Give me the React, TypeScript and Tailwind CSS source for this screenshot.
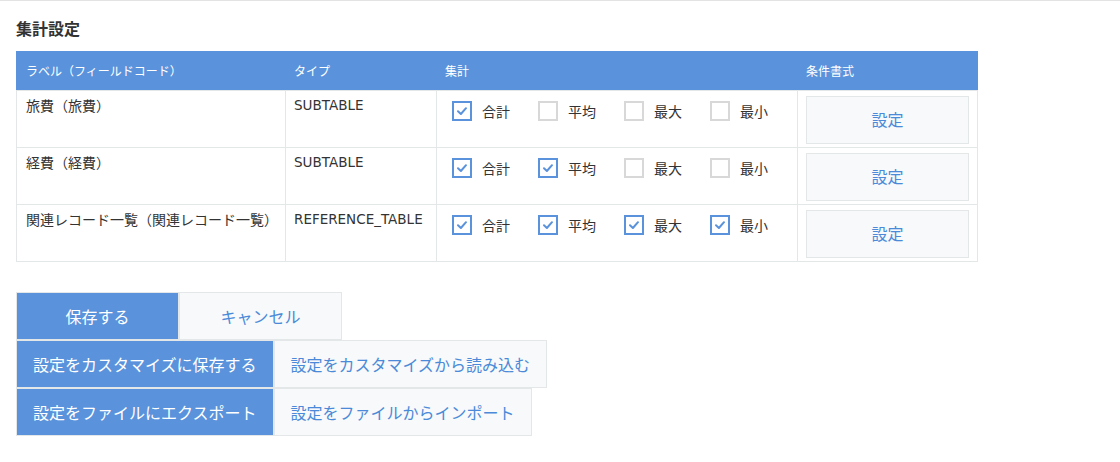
import React from 'react';

type Row = {
  label: string;
  type: string;
  checks: boolean[];
};

const rows: Row[] = [
  { label: '旅費（旅費）', type: 'SUBTABLE', checks: [true, false, false, false] },
  { label: '経費（経費）', type: 'SUBTABLE', checks: [true, true, false, false] },
  { label: '関連レコード一覧（関連レコード一覧）', type: 'REFERENCE_TABLE', checks: [true, true, true, true] },
];

const aggNames = ['合計', '平均', '最大', '最小'];

const Checkbox: React.FC<{ checked: boolean; label: string }> = ({ checked, label }) => {
  return (
    <label className="flex items-center w-[86px] shrink-0">
      <span
        className={`w-[20px] h-[20px] border-2 flex items-center justify-center bg-white ${
          checked ? 'border-[#5a93db]' : 'border-[#d8d8d8]'
        }`}
      >
        {checked && (
          <svg width="16" height="16" viewBox="0 0 16 16" fill="none">
            <path d="M4 8.3 L6.9 11 L12 5.2" stroke="#5a93db" strokeWidth="2" strokeLinecap="round" strokeLinejoin="round" />
          </svg>
        )}
      </span>
      <span className="ml-[10px] text-[14px] leading-[20px] text-[#333]">{label}</span>
    </label>
  );
};

const Button: React.FC<{ primary?: boolean; children: React.ReactNode }> = ({ primary, children }) => {
  return (
    <button
      className={`h-[48px] min-w-[163px] px-4 border text-[16px] leading-[20px] whitespace-nowrap ${
        primary
          ? 'bg-[#5a93db] border-[#e3e7e8] text-white'
          : 'bg-[#f7f9fa] border-[#e3e7e8] text-[#4a8ad8]'
      }`}
    >
      {children}
    </button>
  );
};

const App: React.FC = () => {
  return (
    <div
      className="min-h-[462px] bg-white border-t border-[#e3e3e3] px-4 text-[#333]"
      style={{ fontFamily: '"Noto Sans CJK JP", "Noto Sans", sans-serif' }}
    >
      <h2 className="mt-[15px] text-[16px] leading-[24px] font-bold text-[#333]">集計設定</h2>

      <div className="mt-[11px] w-[962px]">
        {/* header */}
        <div className="flex h-[39px] items-center bg-[#5a93db] text-white text-[12px] leading-[16px]">
          <div className="w-[270px] pl-[10px]">ラベル（フィールドコード）</div>
          <div className="w-[151px] pl-[8px]">タイプ</div>
          <div className="w-[361px] pl-[8px]">集計</div>
          <div className="w-[180px] pl-[8px]">条件書式</div>
        </div>

        {/* body */}
        <div className="border-x border-t border-[#e3e7e8]">
          {rows.map((row) => (
            <div key={row.label} className="flex h-[57px] border-b border-[#e3e7e8]">
              <div className="w-[268px] pl-[9px] pt-[4px] text-[14px] leading-[20px] whitespace-nowrap">
                {row.label}
              </div>
              <div
                className="w-[151px] border-l border-[#e3e7e8] pl-[8px] pt-[4px] text-[13.5px] leading-[20px]"
                style={{ fontFamily: '"DejaVu Sans", sans-serif' }}
              >
                {row.type}
              </div>
              <div className="w-[361px] border-l border-[#e3e7e8] pl-[15px] pt-[10px] flex items-start">
                {aggNames.map((n, i) => (
                  <Checkbox key={n} checked={row.checks[i]} label={n} />
                ))}
              </div>
              <div className="w-[180px] border-l border-[#e3e7e8] pl-[8px] pt-[5px]">
                <button className="w-[163px] h-[48px] bg-[#f7f9fa] border border-[#e3e7e8] text-[16px] leading-[20px] pb-[3px] text-[#4a8ad8]">
                  設定
                </button>
              </div>
            </div>
          ))}
        </div>
      </div>

      <div className="mt-[30px] flex flex-col items-start">
        <div className="flex">
          <Button primary>保存する</Button>
          <Button>キャンセル</Button>
        </div>
        <div className="flex">
          <Button primary>設定をカスタマイズに保存する</Button>
          <Button>設定をカスタマイズから読み込む</Button>
        </div>
        <div className="flex">
          <Button primary>設定をファイルにエクスポート</Button>
          <Button>設定をファイルからインポート</Button>
        </div>
      </div>
    </div>
  );
};

export default App;
